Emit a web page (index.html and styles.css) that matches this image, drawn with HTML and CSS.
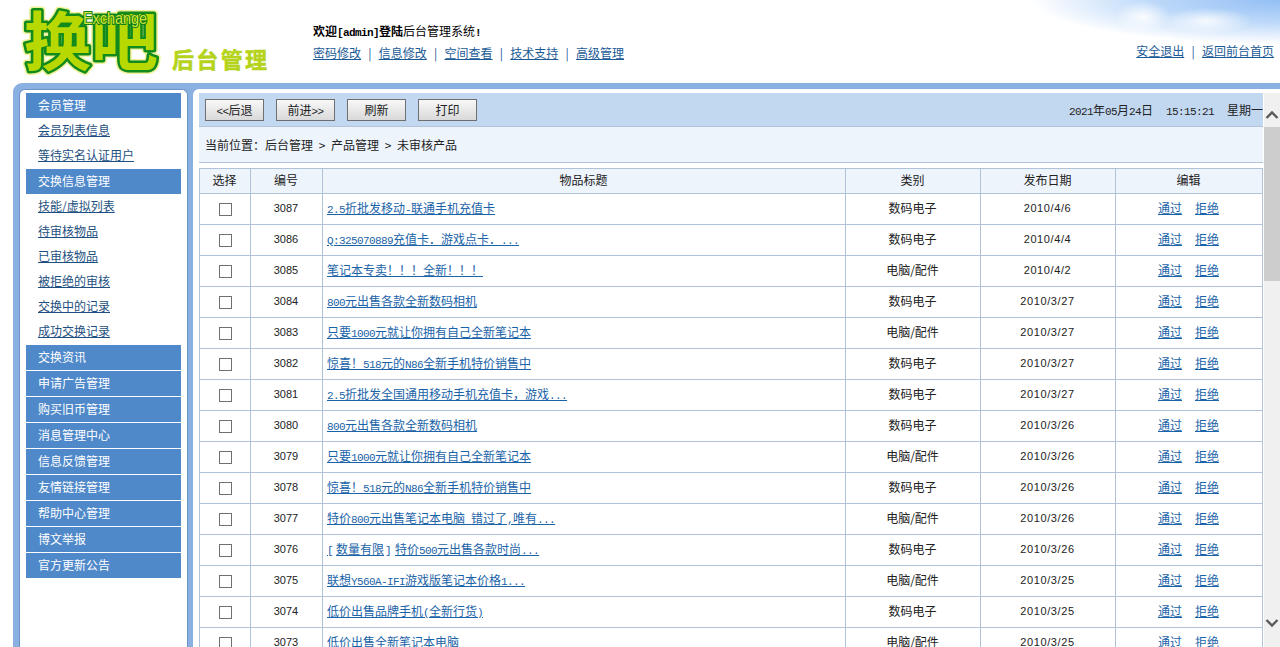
FILE: index.html
```html
<!DOCTYPE html>
<html lang="zh-CN">
    <head>
        <meta charset="UTF-8">
        <title>后台管理</title>
        <link rel="stylesheet" href="styles.css">
    </head>
    <body>
        <!-- Top header: logo, welcome text and links -->
        <div id="header">
            <svg class="logo" width="313" height="83" viewBox="0 0 313 83">
                <text class="logo-outer" x="24" y="65" textLength="134" lengthAdjust="spacingAndGlyphs">换吧</text>
                <text class="logo-main" x="24" y="65" textLength="134" lengthAdjust="spacingAndGlyphs">换吧</text>
                <text class="logo-en" x="83" y="24" textLength="64" lengthAdjust="spacingAndGlyphs">Exchange</text>
                <text class="logo-sub" x="172" y="68" textLength="95" lengthAdjust="spacing">后台管理</text>
            </svg>
            <div class="welcome">
                <p class="welcome-txt"><b>欢迎<span class="en">[admin]</span>登陆</b>后台管理系统<b class="en">!</b></p>
                <p class="top-links">
                    <a href="#">密码修改</a><i>|</i><a href="#">信息修改</a><i>|</i><a href="#">空间查看</a><i>|</i><a href="#">技术支持</a><i>|</i><a href="#">高级管理</a>
                </p>
            </div>
            <p class="right-links"><a href="#">安全退出</a><i>|</i><a href="#">返回前台首页</a></p>
        </div>

        <div id="frame">
            <!-- Left menu -->
            <div id="side">
                <div class="menu-head">会员管理</div>
                <a class="menu-itm" href="#">会员列表信息</a>
                <a class="menu-itm" href="#">等待实名认证用户</a>
                <div class="menu-head">交换信息管理</div>
                <a class="menu-itm" href="#">技能/虚拟列表</a>
                <a class="menu-itm" href="#">待审核物品</a>
                <a class="menu-itm" href="#">已审核物品</a>
                <a class="menu-itm" href="#">被拒绝的审核</a>
                <a class="menu-itm" href="#">交换中的记录</a>
                <a class="menu-itm" href="#">成功交换记录</a>
                <div class="menu-head">交换资讯</div>
                <div class="menu-head">申请广告管理</div>
                <div class="menu-head">购买旧币管理</div>
                <div class="menu-head">消息管理中心</div>
                <div class="menu-head">信息反馈管理</div>
                <div class="menu-head">友情链接管理</div>
                <div class="menu-head">帮助中心管理</div>
                <div class="menu-head">博文举报</div>
                <div class="menu-head">官方更新公告</div>
            </div>

            <!-- Main content with its scrollbar -->
            <div id="main">
                <div id="content">
                    <div class="toolbar">
                        <button class="tool-btn"><span class="en">&lt;&lt;</span>后退</button>
                        <button class="tool-btn">前进<span class="en">&gt;&gt;</span></button>
                        <button class="tool-btn">刷新</button>
                        <button class="tool-btn">打印</button>
                        <span class="clock"><span><span class="en">2021</span>年<span class="en">05</span>月<span class="en">24</span>日</span><span class="en">15:15:21</span><span>星期一</span></span>
                    </div>
                    <div class="crumbs">当前位置：后台管理<span class="gt">&gt;</span>产品管理<span class="gt">&gt;</span>未审核产品</div>
                    <table class="goods">
                        <colgroup>
                            <col class="c-sel"><col class="c-num"><col class="c-title"><col class="c-type"><col class="c-date"><col class="c-edit">
                        </colgroup>
                        <tr><th>选择</th><th>编号</th><th>物品标题</th><th>类别</th><th>发布日期</th><th>编辑</th></tr>
                        <tr><td class="sel"><input type="checkbox"></td><td class="num">3087</td><td class="title"><a href="#"><span class="en">2.5</span>折批发移动<span class="en">-</span>联通手机充值卡</a></td><td>数码电子</td><td class="num date">2010/4/6</td><td class="ops"><a href="#">通过</a><a href="#">拒绝</a></td></tr>
                        <tr><td class="sel"><input type="checkbox"></td><td class="num">3086</td><td class="title"><a href="#"><span class="en">Q:325070889</span>充值卡．游戏点卡．<span class="en">...</span></a></td><td>数码电子</td><td class="num date">2010/4/4</td><td class="ops"><a href="#">通过</a><a href="#">拒绝</a></td></tr>
                        <tr><td class="sel"><input type="checkbox"></td><td class="num">3085</td><td class="title"><a href="#">笔记本专卖！！！全新！！！</a></td><td>电脑/配件</td><td class="num date">2010/4/2</td><td class="ops"><a href="#">通过</a><a href="#">拒绝</a></td></tr>
                        <tr><td class="sel"><input type="checkbox"></td><td class="num">3084</td><td class="title"><a href="#"><span class="en">800</span>元出售各款全新数码相机</a></td><td>数码电子</td><td class="num date">2010/3/27</td><td class="ops"><a href="#">通过</a><a href="#">拒绝</a></td></tr>
                        <tr><td class="sel"><input type="checkbox"></td><td class="num">3083</td><td class="title"><a href="#">只要<span class="en">1000</span>元就让你拥有自己全新笔记本</a></td><td>电脑/配件</td><td class="num date">2010/3/27</td><td class="ops"><a href="#">通过</a><a href="#">拒绝</a></td></tr>
                        <tr><td class="sel"><input type="checkbox"></td><td class="num">3082</td><td class="title"><a href="#">惊喜！<span class="en">518</span>元的<span class="en">N86</span>全新手机特价销售中</a></td><td>数码电子</td><td class="num date">2010/3/27</td><td class="ops"><a href="#">通过</a><a href="#">拒绝</a></td></tr>
                        <tr><td class="sel"><input type="checkbox"></td><td class="num">3081</td><td class="title"><a href="#"><span class="en">2.5</span>折批发全国通用移动手机充值卡，游戏<span class="en">...</span></a></td><td>数码电子</td><td class="num date">2010/3/27</td><td class="ops"><a href="#">通过</a><a href="#">拒绝</a></td></tr>
                        <tr><td class="sel"><input type="checkbox"></td><td class="num">3080</td><td class="title"><a href="#"><span class="en">800</span>元出售各款全新数码相机</a></td><td>数码电子</td><td class="num date">2010/3/26</td><td class="ops"><a href="#">通过</a><a href="#">拒绝</a></td></tr>
                        <tr><td class="sel"><input type="checkbox"></td><td class="num">3079</td><td class="title"><a href="#">只要<span class="en">1000</span>元就让你拥有自己全新笔记本</a></td><td>电脑/配件</td><td class="num date">2010/3/26</td><td class="ops"><a href="#">通过</a><a href="#">拒绝</a></td></tr>
                        <tr><td class="sel"><input type="checkbox"></td><td class="num">3078</td><td class="title"><a href="#">惊喜！<span class="en">518</span>元的<span class="en">N86</span>全新手机特价销售中</a></td><td>数码电子</td><td class="num date">2010/3/26</td><td class="ops"><a href="#">通过</a><a href="#">拒绝</a></td></tr>
                        <tr><td class="sel"><input type="checkbox"></td><td class="num">3077</td><td class="title"><a href="#">特价<span class="en">800</span>元出售笔记本电脑<span class="en"> </span>错过了<span class="en">,</span>唯有<span class="en">...</span></a></td><td>电脑/配件</td><td class="num date">2010/3/26</td><td class="ops"><a href="#">通过</a><a href="#">拒绝</a></td></tr>
                        <tr><td class="sel"><input type="checkbox"></td><td class="num">3076</td><td class="title"><a href="#"><span class="en br-l">[</span>数量有限<span class="en br-r">]</span>特价<span class="en">500</span>元出售各款时尚<span class="en">...</span></a></td><td>数码电子</td><td class="num date">2010/3/26</td><td class="ops"><a href="#">通过</a><a href="#">拒绝</a></td></tr>
                        <tr><td class="sel"><input type="checkbox"></td><td class="num">3075</td><td class="title"><a href="#">联想<span class="en">Y560A-IFI</span>游戏版笔记本价格<span class="en">1...</span></a></td><td>电脑/配件</td><td class="num date">2010/3/25</td><td class="ops"><a href="#">通过</a><a href="#">拒绝</a></td></tr>
                        <tr><td class="sel"><input type="checkbox"></td><td class="num">3074</td><td class="title"><a href="#">低价出售品牌手机<span class="en">(</span>全新行货<span class="en">)</span></a></td><td>数码电子</td><td class="num date">2010/3/25</td><td class="ops"><a href="#">通过</a><a href="#">拒绝</a></td></tr>
                        <tr><td class="sel"><input type="checkbox"></td><td class="num">3073</td><td class="title"><a href="#">低价出售全新笔记本电脑</a></td><td>电脑/配件</td><td class="num date">2010/3/25</td><td class="ops"><a href="#">通过</a><a href="#">拒绝</a></td></tr>
                    </table>
                </div>
                <div id="scroll">
                    <svg class="arrow-up" width="16" height="10" viewBox="0 0 16 10"><path d="M2.5 8 8 2.5 13.5 8" fill="none" stroke="#5a5a5a" stroke-width="2.4"/></svg>
                    <div class="thumb"></div>
                    <svg class="arrow-down" width="16" height="10" viewBox="0 0 16 10"><path d="M2.5 2 8 7.5 13.5 2" fill="none" stroke="#5a5a5a" stroke-width="2.4"/></svg>
                </div>
            </div>
        </div>
    </body>
</html>
```

FILE: styles.css
```css
* {
    margin: 0;
    padding: 0;
    box-sizing: border-box;
}

html, body {
    height: 647px;
    overflow: hidden;
}

body {
    font: 12px 'Noto Sans CJK SC', sans-serif;
    color: #222;
    background-color: white;
}

a {
    color: #1b5a96;
}

/* Latin text, half as wide as the Chinese text around it */
.en {
    font-family: 'Liberation Mono', monospace;
    font-size: 11px;
    letter-spacing: -.6px;
}

.br-l {padding-right: 3px;}
.br-r {padding: 0 4px 0 1px;}

/* Header */
#header {
    display: flex;
    height: 83px;
    background:
        radial-gradient(ellipse 28px 16px at 1143px 17px, rgba(255, 255, 255, .9), rgba(255, 255, 255, 0)),
        radial-gradient(ellipse 46px 13px at 1207px 21px, rgba(255, 255, 255, .85), rgba(255, 255, 255, 0)),
        radial-gradient(ellipse 250px 44px at 1280px 0, #93bff4 0%, #bcd8f9 50%, rgba(255, 255, 255, 0) 100%),
        white;
}

.logo {
    flex: none;
}

.logo text {
    font-family: 'Noto Sans CJK SC', sans-serif;
    font-weight: bold;
}

.logo-outer {
    font-size: 64px;
    fill: #eef29a;
    stroke: #eef29a;
    stroke-width: 8px;
    stroke-linejoin: round;
}

.logo-main {
    font-size: 64px;
    fill: #b7d800;
    stroke: #138a1c;
    stroke-width: 5px;
    stroke-linejoin: round;
    paint-order: stroke;
}

.logo .logo-en {
    font-family: 'Liberation Sans', sans-serif;
    font-size: 16px;
    font-weight: normal;
    fill: #d3e63a;
    stroke: #0f7d18;
    stroke-width: 2px;
    stroke-linejoin: round;
    paint-order: stroke;
}

.logo-sub {
    font-size: 22px;
    fill: #b4d31a;
    stroke: #b4d31a;
    stroke-width: .5px;
}

.welcome {
    padding-top: 22px;
}

.welcome-txt {
    height: 18px;
    line-height: 18px;
    color: black;
}

.top-links {
    margin-top: 4px;
    line-height: 18px;
    white-space: nowrap;
}

.top-links i, .right-links i {
    display: inline-block;
    width: 17.75px;
    text-align: center;
    font-style: normal;
    color: #1b5a96;
}

.right-links {
    margin-left: auto;
    padding: 42px 6px 0 0;
    line-height: 18px;
    white-space: nowrap;
}

/* Blue frame around the two panels */
#frame {
    display: flex;
    gap: 5px;
    height: 564px;
    margin-left: 13px;
    padding: 6px 0 0 6px;
    border-radius: 9px 0 0 0;
    background-color: #8ab0e2;
}

/* Left menu */
#side {
    flex: none;
    width: 169px;
    padding: 3px 6px 0 6px;
    border: 1px solid #6a93c6;
    border-bottom: none;
    border-radius: 6px 6px 0 0;
    background-color: white;
}

.menu-head {
    height: 25px;
    margin-bottom: 1px;
    padding-left: 12px;
    line-height: 24px;
    color: white;
    background-color: #5089ca;
}

.menu-itm {
    display: block;
    height: 25px;
    margin-top: -1px;
    margin-bottom: 1px;
    padding-left: 12px;
    line-height: 23px;
    color: #1d4f80;
}

/* Main panel */
#main {
    display: flex;
    flex: 1;
    min-width: 0;
    padding: 4px 0 0 6px;
    border-radius: 6px 0 0 0;
    background-color: white;
}

#content {
    width: 1064px;
    overflow: hidden;
}

.toolbar {
    display: flex;
    align-items: center;
    gap: 12px;
    height: 34px;
    padding-left: 6px;
    border-bottom: 1px solid #b3c4d8;
    background-color: #c2d8f1;
    white-space: nowrap;
}

.tool-btn {
    width: 59px;
    height: 22px;
    border: 1px solid #6f6f6f;
    font: 12px 'Noto Sans CJK SC', sans-serif;
    color: #222;
    background: linear-gradient(#f8f8f8, #d9d9d9);
}

.clock {
    display: flex;
    align-items: baseline;
    gap: 13px;
    margin-left: auto;
}

.crumbs {
    height: 36px;
    padding-left: 6px;
    border-bottom: 1px solid #b3c4d8;
    line-height: 36px;
    background-color: #eef4fc;
}

.gt {
    display: inline-block;
    width: 18px;
    text-align: center;
}

/* Goods table */
.goods {
    width: 1064px;
    margin-top: 5px;
    table-layout: fixed;
    border-collapse: collapse;
}

.c-sel {width: 51px;}
.c-num {width: 72px;}
.c-title {width: 523px;}
.c-type, .c-date {width: 135px;}
.c-edit {width: 147px;}

.goods th, .goods td {
    padding: 0 1px 3px 0;
    border: 1px solid #afc2d8;
    text-align: center;
}

.goods th {
    height: 25px;
    font-weight: normal;
    background-color: #eef4fc;
}

.goods td {
    height: 31px;
}

.goods .sel {
    padding-right: 0;
}

.goods input[type=checkbox] {
    appearance: none;
    display: block;
    width: 13px;
    height: 13px;
    margin: 4px auto 0;
    border: 1px solid #707070;
    background-color: white;
}

.goods .title {
    padding-left: 4px;
    text-align: left;
}

.goods a {
    color: #1a63a8;
}

.goods .num {
    padding-bottom: 2px;
    font-family: 'Liberation Sans', sans-serif;
    font-size: 11px;
}

.goods .date {
    letter-spacing: .6px;
}

.ops a {
    margin: 0 6.5px;
}

/* Scrollbar */
#scroll {
    flex: none;
    display: flex;
    flex-direction: column;
    width: 16px;
    margin-left: 1px;
    background-color: #f0f0f0;
}

.arrow-up {
    flex: none;
    margin-top: 17px;
}

.thumb {
    flex: none;
    height: 154px;
    margin-top: 7px;
    background-color: #cdcdcd;
}

.arrow-down {
    flex: none;
    margin-top: 337px;
}
```
